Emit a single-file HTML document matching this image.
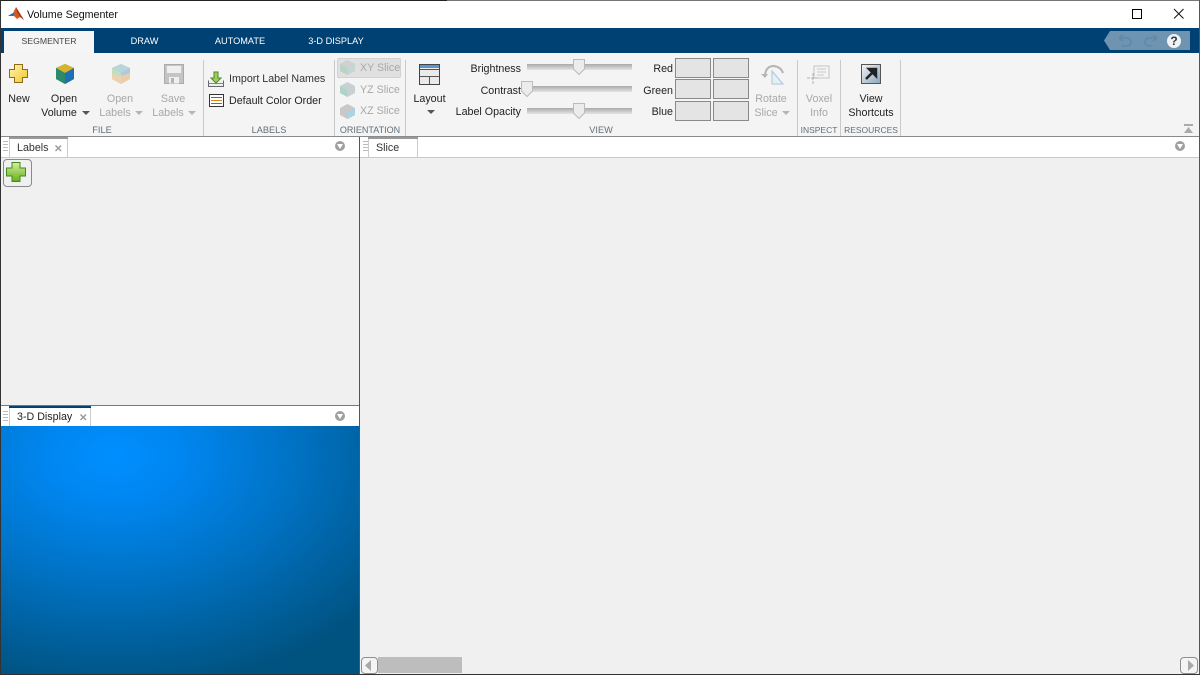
<!DOCTYPE html>
<html><head><meta charset="utf-8"><style>
html,body{margin:0;padding:0}
body{width:1200px;height:675px;overflow:hidden;position:relative;background:#f0f0f0;font-family:"Liberation Sans",sans-serif;font-size:10.7px;color:#222}
.a{position:absolute}
.t{position:absolute;white-space:nowrap;line-height:14px;height:14px;margin-top:1px}
.c{transform:translateX(-50%)}
.r{transform:translateX(-100%)}
.d{color:#a8a8a8}
.g{color:#5f6f7a;font-size:9.2px}
.tab{color:#fff;font-size:9.2px;top:33px}
.sep{position:absolute;top:60px;width:1px;height:76px;background:#c9c9c9}
.sw{position:absolute;width:34px;height:18px;background:#e4e4e4;border:1px solid #8a8a8a}
.track{position:absolute;left:527px;width:105px;height:6px;background:linear-gradient(#aaa,#e4e4e4)}
.arr{position:absolute;width:0;height:0;border-left:4px solid transparent;border-right:4px solid transparent;border-top:4px solid #555}
.arr.l{border-top-color:#b5b5b5}
.dd{position:absolute;width:10px;height:10px;border-radius:50%;background:#a0a0a0}
.dd:after{content:"";position:absolute;left:1.500px;top:3px;border-left:3.500px solid transparent;border-right:3.500px solid transparent;border-top:5px solid #fff}
.grip{position:absolute;width:5px;height:12px;background:repeating-linear-gradient(#bbb 0 1px,#fff 1px 3px)}
svg{position:absolute;overflow:visible}
</style></head><body>
<!-- frame -->
<div class="a" style="left:0;top:0;width:447px;height:1px;background:#222"></div>
<div class="a" style="left:447px;top:0;width:753px;height:1px;background:#777"></div>
<div class="a" style="left:0;top:1px;width:1200px;height:27px;background:#fff"></div>
<svg style="left:8px;top:6px" width="17" height="16" viewBox="0 0 17 16"><path d="M0 10L5 7 8 1 11 6 16 14 12 11 9 13 5 9Z" fill="#d8591c"/><path d="M0 10L5 7 7 9 5 10Z" fill="#2a6fb0"/><path d="M8 1L11 6 16 14 12 11 9 6Z" fill="#a9341a"/></svg>
<div class="t" style="left:27px;top:7px;color:#111">Volume Segmenter</div>
<div class="a" style="left:1132px;top:9px;width:8px;height:8px;border:1px solid #000"></div>
<svg style="left:1174px;top:9px" width="10" height="10"><path d="M0 0L9.500 9.500M9.500 0L0 9.500" stroke="#111" fill="none"/></svg>
<!-- blue bar -->
<div class="a" style="left:0;top:28px;width:1200px;height:25px;background:#004173"></div>
<div class="a" style="left:4px;top:31px;width:90px;height:22px;background:#f5f5f5"></div>
<div class="t c" style="left:49px;top:33px;font-size:8.700px;color:#444">SEGMENTER</div>
<div class="t c tab" style="left:144.500px">DRAW</div>
<div class="t c tab" style="left:240px">AUTOMATE</div>
<div class="t c tab" style="left:336px">3-D DISPLAY</div>
<svg style="left:1104px;top:31px" width="87" height="19"><path d="M6 0H86V19H6L0 9.500Z" fill="#6f94b2"/>
<path d="M15 7H24Q27 8 27 11.500Q27 15 23 15H18M15 7L19 4M15 7L19 10" fill="none" stroke="#5c8aae" stroke-width="1.600"/>
<path d="M53 7H44Q41 8 41 11.500Q41 15 45 15H48M53 7L49 4M53 7L49 10" fill="none" stroke="#5c8aae" stroke-width="1.600"/>
<circle cx="70" cy="10" r="7" fill="#f2f2f2"/></svg>
<div class="t c" style="left:1174px;top:33px;font-size:12px;font-weight:bold;color:#1f3a55">?</div>
<!-- toolstrip -->
<div class="a" style="left:0;top:53px;width:1200px;height:83px;background:#f4f4f4"></div>
<div class="sep" style="left:203px"></div><div class="sep" style="left:334px"></div><div class="sep" style="left:405px"></div><div class="sep" style="left:797px"></div><div class="sep" style="left:840px"></div><div class="sep" style="left:900px"></div>

<svg style="left:9px;top:64px" width="20" height="20"><defs><linearGradient id="y" x1="0" y1="0" x2="1" y2="1"><stop offset="0" stop-color="#fff6b0"/><stop offset="1" stop-color="#f2c62c"/></linearGradient><linearGradient id="gr" x1="0" y1="0" x2="0" y2="1"><stop offset="0" stop-color="#d8ee9a"/><stop offset="1" stop-color="#62b01e"/></linearGradient></defs><path d="M5.500 .500H13.500V5.500H18.500V13.500H13.500V18.500H5.500V13.500H.5V5.500H5.500Z" fill="url(#y)" stroke="#8f6a1c"/></svg>
<div class="t c" style="left:19px;top:91px">New</div>

<svg style="left:55px;top:63px" width="20" height="22"><path d="M10 1L19 5V16L10 21 1 16V5Z" fill="#2f8f4f"/><path d="M10 1L19 5 10 10 1 5Z" fill="#d9b32a"/><path d="M1 5L10 10V21L1 16Z" fill="#2c8a6a"/><path d="M10 10L19 5V16L10 21Z" fill="#1f6fb5"/></svg>
<div class="t c" style="left:64px;top:91px">Open</div><div class="t c" style="left:59px;top:105px">Volume</div><div class="arr" style="left:82px;top:111px"></div>

<svg style="left:111px;top:63px;opacity:.5" width="20" height="22"><path d="M10 1L19 5V16L10 21 1 16V5Z" fill="#6aa0c8"/><path d="M1 5L10 10V21L1 16Z" fill="#8fcf8a"/><path d="M1 5L10 1 19 5 10 10Z" fill="#7fb8c0"/><path d="M10 13L19 10V16L10 21Z" fill="#e6a860"/><path d="M1 11L10 14V21L1 16Z" fill="#e8b070"/></svg>
<div class="t c d" style="left:120px;top:91px">Open</div><div class="t c d" style="left:115px;top:105px">Labels</div><div class="arr l" style="left:135px;top:111px"></div>

<svg style="left:164px;top:64px" width="20" height="20"><path d="M.5 .500H19.500V19.500H.5Z" fill="#c4c4c4" stroke="#aaa"/><rect x="3" y="2" width="14" height="7" fill="#efefef"/><rect x="5" y="13" width="10" height="6.500" fill="#efefef"/><rect x="7" y="14" width="3" height="5" fill="#b5b5b5"/></svg>
<div class="t c d" style="left:173px;top:91px">Save</div><div class="t c d" style="left:168px;top:105px">Labels</div><div class="arr l" style="left:188px;top:111px"></div>
<div class="t c g" style="left:102px;top:122px">FILE</div>

<svg style="left:208px;top:71px" width="17" height="16"><path d="M.5 9.500V15.500H15.500V9.500" fill="#eee" stroke="#666"/><path d="M.5 12.500H15.500" stroke="#888"/><path d="M6 1H10V7H13L8 12 3 7H6Z" fill="#9fcf5a" stroke="#4d8a2a"/></svg>
<div class="t" style="left:229px;top:71px;color:#333">Import Label Names</div>
<svg style="left:209px;top:94px" width="15" height="13"><rect x=".5" y=".5" width="14" height="12" fill="#fff" stroke="#333"/><path d="M2 3.500H13" stroke="#2a6fc0"/><path d="M2 6.500H13" stroke="#e08a1c"/><path d="M2 9.500H13" stroke="#c8403a"/></svg>
<div class="t" style="left:229px;top:93px">Default Color Order</div>
<div class="t c g" style="left:269px;top:122px">LABELS</div>

<div class="a" style="left:337px;top:58px;width:64px;height:20px;background:#e0e0e0;border-radius:2px;box-shadow:inset 0 0 0 1px #d2d2d2"></div>
<svg style="left:339px;top:59px" width="17" height="17"><path d="M8.500 1L16 5V12L8.500 16 1 12V5Z" fill="#c3d6d6"/><path d="M1 5L8.500 9V16L1 12Z" fill="#b9d4c4"/><path d="M8.500 1L16 5 8.500 9 1 5Z" fill="#d0d0d0"/></svg>
<svg style="left:339px;top:81px" width="17" height="17"><path d="M8.500 1L16 5V12L8.500 16 1 12V5Z" fill="#c8d0d4"/><path d="M1 5L8.500 9V16L1 12Z" fill="#aed4c8"/></svg>
<svg style="left:339px;top:103px" width="17" height="17"><path d="M8.500 1L16 5V12L8.500 16 1 12V5Z" fill="#c8c8c8"/><path d="M8.500 9L16 5V12L8.500 16Z" fill="#a8d4e4"/></svg>
<div class="t d" style="left:360px;top:60px">XY Slice</div>
<div class="t d" style="left:360px;top:82px">YZ Slice</div>
<div class="t d" style="left:360px;top:103px">XZ Slice</div>
<div class="t c g" style="left:370px;top:122px;font-size:9px">ORIENTATION</div>

<svg style="left:419px;top:64px" width="21" height="21"><rect x=".5" y=".5" width="20" height="20" fill="#eaeaea" stroke="#444"/><rect x="1" y="1" width="19" height="3" fill="#5a96cc"/><path d="M1 5.500H20M1 12.500H20M10.500 12.500V20" stroke="#555" fill="none"/></svg>
<div class="t c" style="left:429.500px;top:91px">Layout</div><div class="arr" style="left:427px;top:110px"></div>

<div class="t r" style="left:521px;top:61px">Brightness</div>
<div class="t r" style="left:521px;top:83px">Contrast</div>
<div class="t r" style="left:521px;top:104px">Label Opacity</div>
<div class="track" style="top:64px"></div><div class="track" style="top:86px"></div><div class="track" style="top:108px"></div>
<svg style="left:573px;top:59px" width="12" height="17"><path d="M.5 .5H11.500V10L6 15.500 .5 10Z" fill="#ececec" stroke="#bbb"/></svg>
<svg style="left:521px;top:81px" width="12" height="17"><path d="M.5 .5H11.500V10L6 15.500 .5 10Z" fill="#ececec" stroke="#bbb"/></svg>
<svg style="left:573px;top:103px" width="12" height="17"><path d="M.5 .5H11.500V10L6 15.500 .5 10Z" fill="#ececec" stroke="#bbb"/></svg>
<div class="t c g" style="left:601px;top:122px">VIEW</div>

<div class="t r" style="left:673px;top:61px">Red</div>
<div class="t r" style="left:673px;top:83px">Green</div>
<div class="t r" style="left:673px;top:104px">Blue</div>
<div class="sw" style="left:675px;top:58px"></div><div class="sw" style="left:713px;top:58px"></div>
<div class="sw" style="left:675px;top:79px"></div><div class="sw" style="left:713px;top:79px"></div>
<div class="sw" style="left:675px;top:101px"></div><div class="sw" style="left:713px;top:101px"></div>

<svg style="left:761px;top:64px" width="24" height="24"><path d="M4 11Q5 2 13 2Q20 3 22 9" fill="none" stroke="#b5b5b5" stroke-width="2"/><path d="M0 10H7L4 14Z" fill="#b5b5b5"/><path d="M11 7L22 20H11Z" fill="#e6eff4" stroke="#a6c8dc"/></svg>
<div class="t c d" style="left:771px;top:91px">Rotate</div><div class="t c d" style="left:766px;top:105px">Slice</div><div class="arr l" style="left:782px;top:111px"></div>

<svg style="left:807px;top:65px" width="24" height="20"><rect x="7" y="1" width="15" height="12" fill="#f4f4f4" stroke="#c4c4c4"/><path d="M10 4H19M10 7H19M10 10H17" stroke="#c8c8c8"/><path d="M0 13H11M6 8V19" stroke="#b0b0b0" stroke-dasharray="3 1"/></svg>
<div class="t c d" style="left:819px;top:91px">Voxel</div><div class="t c d" style="left:819px;top:105px">Info</div>
<div class="t c g" style="left:819px;top:122px;font-size:8.500px">INSPECT</div>

<svg style="left:861px;top:64px" width="20" height="20"><defs><linearGradient id="b" x1="0" y1="0" x2="1" y2="1"><stop offset="0" stop-color="#f4f4f4"/><stop offset="1" stop-color="#8aa6bc"/></linearGradient></defs><rect x=".5" y=".5" width="19" height="19" fill="url(#b)" stroke="#555"/><path d="M5 15L12 8M8 5H15V12Z" stroke="#222" stroke-width="2.500" fill="#222"/></svg>
<div class="t c" style="left:871px;top:91px">View</div><div class="t c" style="left:871px;top:105px">Shortcuts</div>
<div class="t c g" style="left:871px;top:122px;font-size:8.500px">RESOURCES</div>

<svg style="left:1183px;top:124px" width="11" height="10"><path d="M1 1H10" stroke="#aaa" stroke-width="2"/><path d="M5.500 3L10 9H1Z" fill="#aaa"/></svg>

<!-- tab strip -->
<div class="a" style="left:0;top:136px;width:1200px;height:1px;background:#8a8a8a"></div>
<div class="a" style="left:0;top:137px;width:1200px;height:20px;background:#fff"></div>
<div class="a" style="left:0;top:157px;width:1200px;height:1px;background:#c9c9c9"></div>

<div class="grip" style="left:3px;top:141px"></div>
<div class="a" style="left:9px;top:137px;width:57px;height:20px;background:#fff;border-left:1px solid #ccc;border-right:1px solid #ccc"></div>
<div class="a" style="left:9px;top:137px;width:59px;height:2px;background:#999"></div>
<div class="t" style="left:17px;top:140px;color:#333">Labels</div>
<svg style="left:55px;top:145px" width="7" height="7"><path d="M.5 .5L6 6M6 .5L.5 6" stroke="#999" stroke-width="1.400"/></svg>
<div class="dd" style="left:335px;top:141px"></div>

<div class="a" style="left:359px;top:137px;width:1px;height:537px;background:#555"></div>
<div class="grip" style="left:363px;top:141px"></div>
<div class="a" style="left:368px;top:137px;width:48px;height:20px;background:#fff;border-left:1px solid #ccc;border-right:1px solid #ccc"></div>
<div class="a" style="left:368px;top:137px;width:50px;height:2px;background:#999"></div>
<div class="t" style="left:376px;top:140px;color:#333">Slice</div>
<div class="dd" style="left:1175px;top:141px"></div>

<div class="a" style="left:3px;top:159px;width:27px;height:26px;border:1px solid #8a8a8a;border-radius:4px;background:#f0f0f0"></div>
<svg style="left:6px;top:162px" width="20" height="20"><path d="M6 .5H14V6H19.500V14H14V19.500H6V14H.5V6H6Z" fill="url(#gr)" stroke="#3f8a1c"/></svg>

<!-- 3D -->
<div class="a" style="left:0;top:405px;width:359px;height:1px;background:#777"></div>
<div class="a" style="left:0;top:406px;width:359px;height:20px;background:#fff"></div>
<div class="grip" style="left:3px;top:411px"></div>
<div class="a" style="left:9px;top:406px;width:80px;height:20px;background:#fff;border-left:1px solid #ccc;border-right:1px solid #ccc"></div>
<div class="a" style="left:9px;top:406px;width:82px;height:2px;background:#004173"></div>
<div class="t" style="left:17px;top:409px;color:#222">3-D Display</div>
<svg style="left:80px;top:414px" width="7" height="7"><path d="M.5 .5L6 6M6 .5L.5 6" stroke="#999" stroke-width="1.400"/></svg>
<div class="dd" style="left:335px;top:411px"></div>
<div class="a" style="left:1px;top:426px;width:358px;height:248px;background:radial-gradient(ellipse 340px 235px at 113px 30px,#008fff 0%,#0086f0 20%,#0074c8 50%,#005a90 88%,#00527f 100%),#00527f"></div>

<!-- scrollbar -->
<div class="a" style="left:378px;top:657px;width:84px;height:16px;background:#bdbdbd"></div>
<div class="a" style="left:361px;top:657px;width:15px;height:15px;border:1px solid #8f8f8f;border-radius:4px;background:#f4f4f4"></div>
<svg style="left:365px;top:660px" width="8" height="11"><path d="M6 0V11L0 5.500Z" fill="#a8a8a8"/></svg>
<div class="a" style="left:1180px;top:657px;width:16px;height:15px;border:1px solid #8f8f8f;border-radius:4px;background:#f4f4f4"></div>
<svg style="left:1188px;top:660px" width="8" height="11"><path d="M0 0V11L6 5.500Z" fill="#a8a8a8"/></svg>

<!-- window edges -->
<div class="a" style="left:0;top:0;width:1px;height:675px;background:#333"></div>
<div class="a" style="left:1199px;top:0;width:1px;height:675px;background:#555"></div>
<div class="a" style="left:0;top:674px;width:1200px;height:1px;background:#333"></div>
</body></html>
